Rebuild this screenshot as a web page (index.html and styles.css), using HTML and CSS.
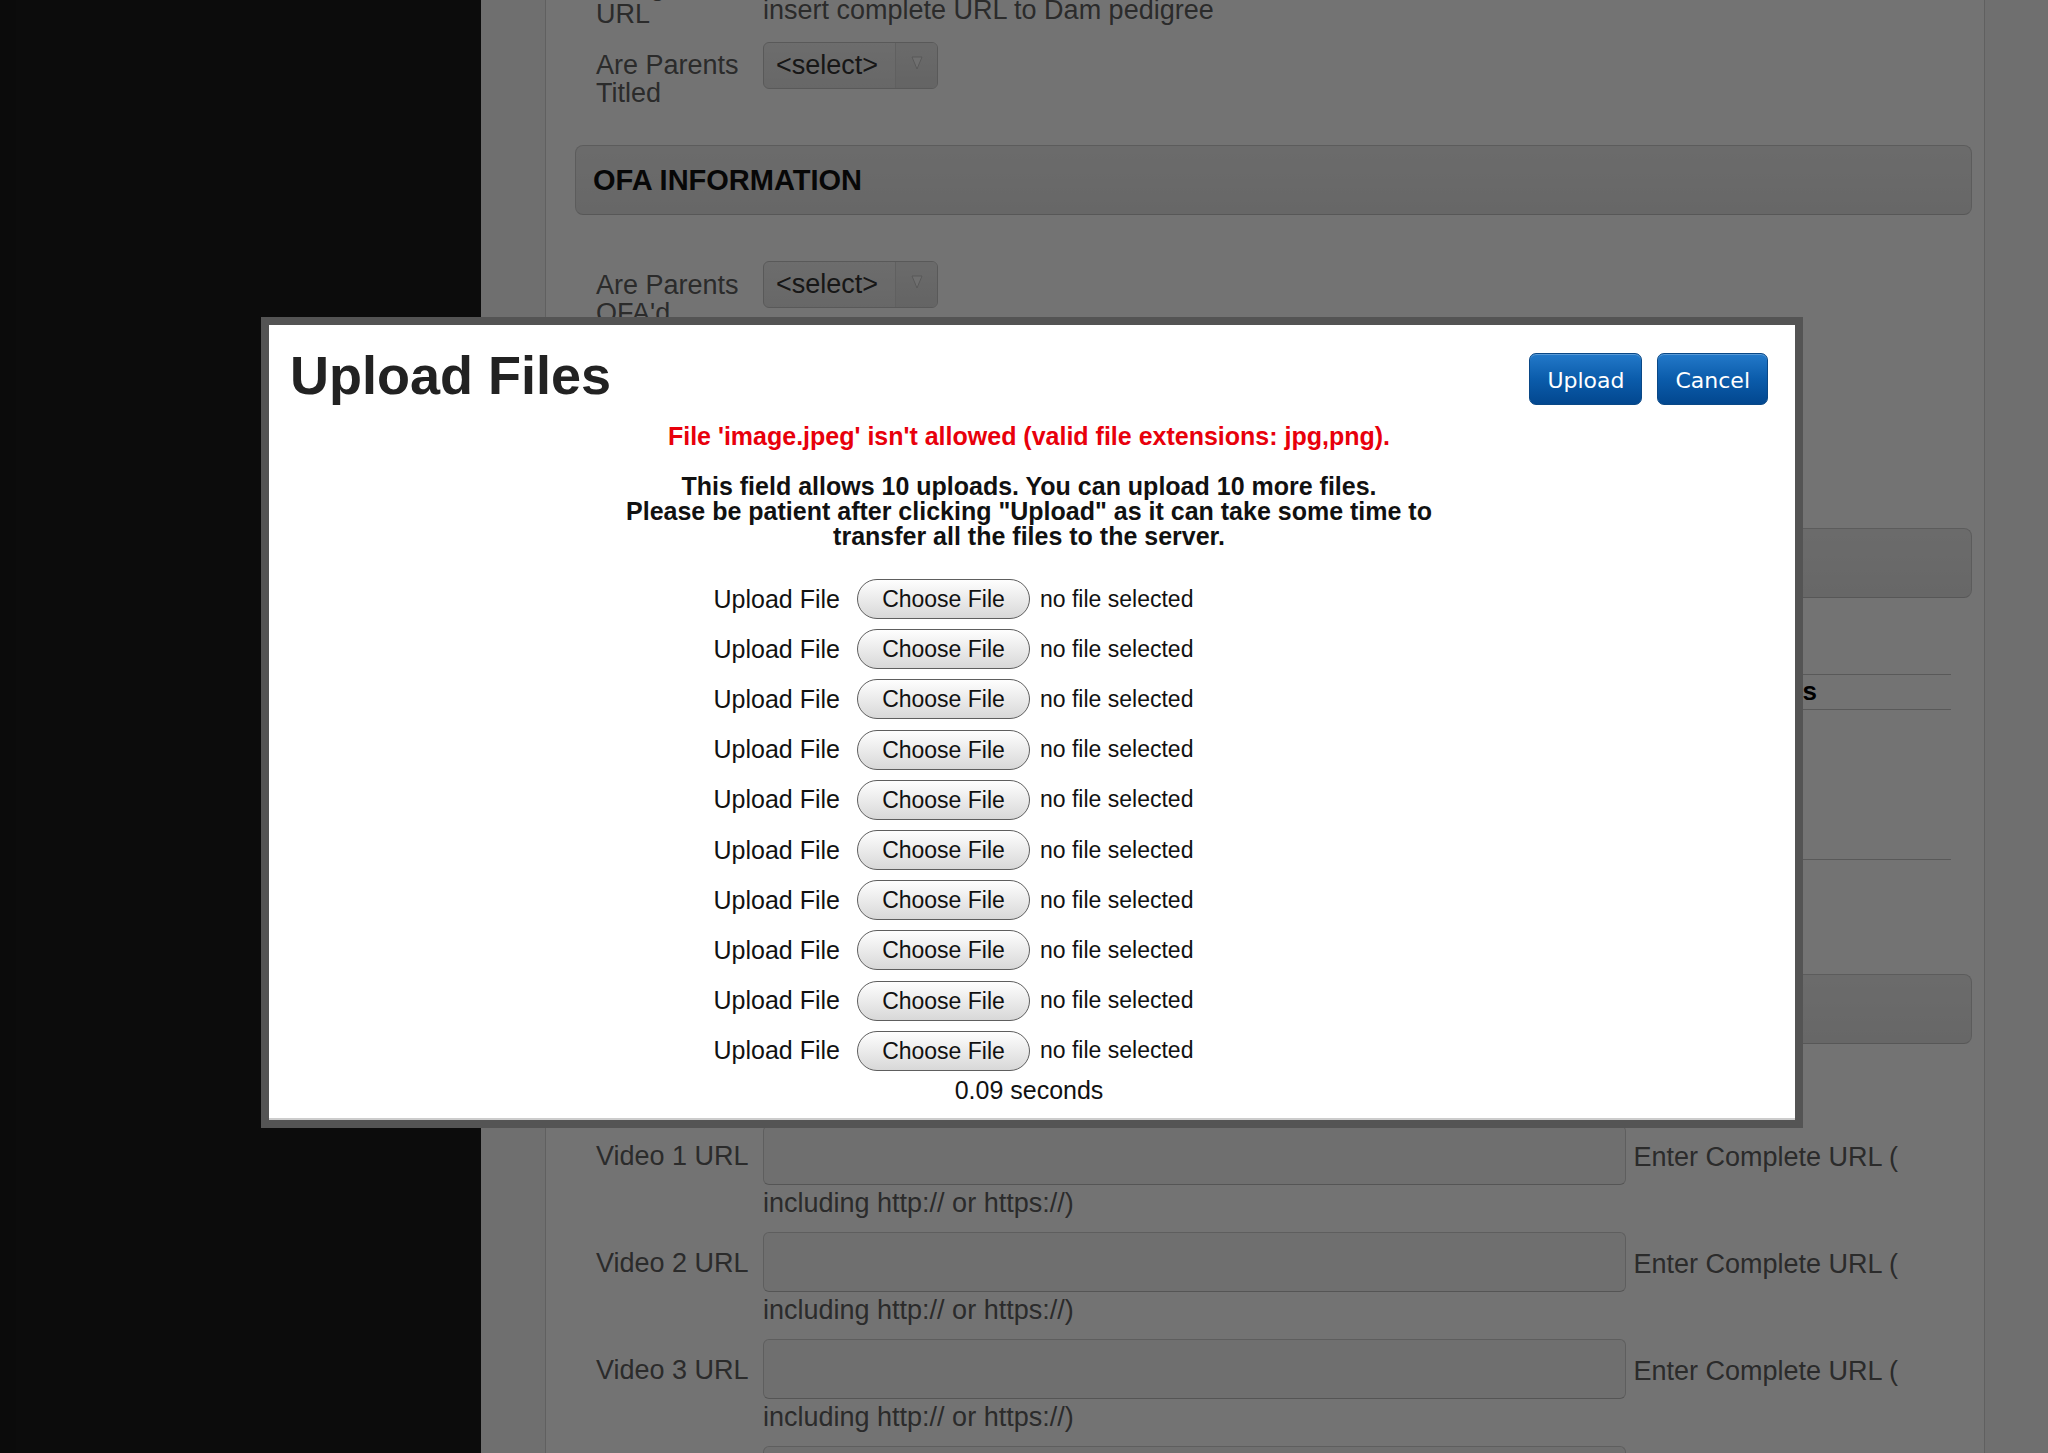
FILE: index.html
```html
<!DOCTYPE html>
<html lang="en">
<head>
    <meta charset="UTF-8">
    <meta name="viewport" content="width=device-width, initial-scale=1.0">
    <title>Litter Registration - Upload Files</title>
    <link rel="stylesheet" href="styles.css">
</head>
<body>
    <div class="site">
        <aside class="sidebar"></aside>
        <main class="main">
            <div class="panel">
                <div class="form-row first-row">
                    <div class="row-label">Dam Pedigree URL</div>
                    <div class="row-field">
                        <div class="text-input small"></div>
                        <div class="hint">insert complete URL to Dam pedigree</div>
                    </div>
                </div>

                <div class="form-row select-row">
                    <div class="row-label">Are Parents Titled</div>
                    <div class="row-field">
                        <div class="select">
                            <span class="select-text">&lt;select&gt;</span>
                            <span class="select-arrow">
                                <svg width="12" height="14" viewBox="0 0 12 14"><polygon points="1,1 11,1 6,13" fill="#f7f7f7" stroke="#c4c4c4" stroke-width="1"/></svg>
                            </span>
                        </div>
                    </div>
                </div>

                <div class="section-head">OFA INFORMATION</div>

                <div class="form-row select-row ofa-row">
                    <div class="row-label">Are Parents OFA'd</div>
                    <div class="row-field">
                        <div class="select">
                            <span class="select-text">&lt;select&gt;</span>
                            <span class="select-arrow">
                                <svg width="12" height="14" viewBox="0 0 12 14"><polygon points="1,1 11,1 6,13" fill="#f7f7f7" stroke="#c4c4c4" stroke-width="1"/></svg>
                            </span>
                        </div>
                    </div>
                </div>

                <div class="section-head head-photos">PHOTOS</div>

                <div class="doc-table">
                    <div class="doc-head">
                        <span>Test Type</span>
                        <span>Results</span>
                    </div>
                    <div class="doc-body"></div>
                </div>

                <div class="section-head head-videos">VIDEOS</div>

                <div class="form-row video-row first-video">
                    <div class="row-label">Video 1 URL</div>
                    <div class="row-field">
                        <span class="text-input wide"></span> Enter Complete URL ( including http:// or https://)
                    </div>
                </div>
                <div class="form-row video-row">
                    <div class="row-label">Video 2 URL</div>
                    <div class="row-field">
                        <span class="text-input wide"></span> Enter Complete URL ( including http:// or https://)
                    </div>
                </div>
                <div class="form-row video-row">
                    <div class="row-label">Video 3 URL</div>
                    <div class="row-field">
                        <span class="text-input wide"></span> Enter Complete URL ( including http:// or https://)
                    </div>
                </div>
                <div class="form-row video-row">
                    <div class="row-label">Video 4 URL</div>
                    <div class="row-field">
                        <span class="text-input wide"></span> Enter Complete URL ( including http:// or https://)
                    </div>
                </div>
            </div>
        </main>
    </div>

    <div class="overlay"></div>

    <div class="modal">
        <div class="modal-body">
            <div class="modal-head">
                <h1>Upload Files</h1>
                <div class="actions">
                    <button class="btn-blue">Upload</button>
                    <button class="btn-blue">Cancel</button>
                </div>
            </div>

            <p class="error">File 'image.jpeg' isn't allowed (valid file extensions: jpg,png).</p>

            <p class="info">This field allows 10 uploads. You can upload 10 more files.<br>Please be patient after clicking "Upload" as it can take some time to transfer all the files to the server.</p>

            <div class="file-list">
                <div class="file-row"><label>Upload File</label><span class="choose">Choose File</span><span class="file-name">no file selected</span></div>
                <div class="file-row"><label>Upload File</label><span class="choose">Choose File</span><span class="file-name">no file selected</span></div>
                <div class="file-row"><label>Upload File</label><span class="choose">Choose File</span><span class="file-name">no file selected</span></div>
                <div class="file-row"><label>Upload File</label><span class="choose">Choose File</span><span class="file-name">no file selected</span></div>
                <div class="file-row"><label>Upload File</label><span class="choose">Choose File</span><span class="file-name">no file selected</span></div>
                <div class="file-row"><label>Upload File</label><span class="choose">Choose File</span><span class="file-name">no file selected</span></div>
                <div class="file-row"><label>Upload File</label><span class="choose">Choose File</span><span class="file-name">no file selected</span></div>
                <div class="file-row"><label>Upload File</label><span class="choose">Choose File</span><span class="file-name">no file selected</span></div>
                <div class="file-row"><label>Upload File</label><span class="choose">Choose File</span><span class="file-name">no file selected</span></div>
                <div class="file-row"><label>Upload File</label><span class="choose">Choose File</span><span class="file-name">no file selected</span></div>
            </div>

            <div class="timing">0.09 seconds</div>
        </div>
    </div>
</body>
</html>
```

FILE: styles.css
```css
* {
    margin: 0;
    padding: 0;
    box-sizing: border-box;
    font-family: 'Liberation Sans', Arial, sans-serif;
}

body {
    background-color: #1b1b1b;
    color: #5f5f5f;
}

.site {
    display: flex;
    height: 100vh;
    overflow: hidden;
}

.sidebar {
    flex: 0 0 481px;
    background-color: #1b1b1b;
    border-left: 16px solid #191919;
}

.main {
    flex: 1;
    background-color: #f6f6f6;
}

/* page behind the dialog */

.panel {
    width: 1440px;
    margin-left: 64px;
    min-height: 1600px;
    background: white;
    border-left: 1px solid #d6d6d6;
    border-right: 1px solid #d6d6d6;
    padding: 0 12px 0 29px;
}

.form-row {
    display: flex;
    align-items: flex-start;
    padding-left: 21px;
    font-size: 27px;
    line-height: 28px;
}

.row-label {
    flex: 0 0 167px;
    color: #5f5f5f;
}

.row-field {
    flex: 1;
    color: #5f5f5f;
}

.first-row {
    margin-top: -60px;
}

.first-row .row-label {
    padding-top: 4px;
}

.hint {
    margin-top: 8px;
}

.select-row {
    margin-top: 14px;
}

.select-row .row-label {
    padding-top: 9px;
}

.ofa-row {
    margin-top: 46px;
}

.ofa-row .row-label {
    padding-top: 10px;
}

.select {
    display: flex;
    width: 175px;
    height: 47px;
    border: 1px solid #c6c6c6;
    border-radius: 6px;
    background: linear-gradient(#f1f1f1, #e5e5e5);
    overflow: hidden;
}

.select-text {
    flex: 1;
    padding-left: 12px;
    line-height: 45px;
    color: #333;
}

.select-arrow {
    flex: 0 0 42px;
    display: flex;
    align-items: flex-start;
    justify-content: center;
    padding-top: 13px;
    border-left: 1px solid #d4d4d4;
    background: linear-gradient(#ececec, #dedede);
}

.text-input {
    display: block;
    background: #f7f7f7;
    border: 1px solid #d0d0d0;
    border-bottom-color: #bdbdbd;
    border-radius: 6px;
}

.text-input.small {
    width: 863px;
    height: 48px;
}

.text-input.wide {
    display: inline-block;
    width: 863px;
    height: 60px;
    vertical-align: -19px;
}

.section-head {
    margin-top: 38px;
    height: 70px;
    border: 1px solid #cdcdcd;
    border-bottom-color: #c2c2c2;
    border-radius: 8px;
    background: linear-gradient(#eeeeee, #e4e4e4);
    padding-left: 17px;
    font-size: 29px;
    font-weight: bold;
    line-height: 68px;
    color: #111;
}

.head-photos {
    margin-top: 201px;
}

.head-videos {
    margin-top: 114px;
}

.doc-table {
    margin: 76px 21px 0 21px;
    border-bottom: 1px solid #c6c6c6;
}

.doc-head {
    display: grid;
    grid-template-columns: 1127px 1fr;
    height: 36px;
    border-top: 1px solid #c6c6c6;
    border-bottom: 1px solid #c6c6c6;
    font-size: 26px;
    font-weight: bold;
    line-height: 33px;
    color: #000;
}

.doc-body {
    height: 149px;
}

.video-row {
    margin-top: 11px;
}

.video-row .row-field {
    line-height: 36px;
}

.first-video {
    margin-top: 81px;
}

.video-row .row-label {
    padding-top: 17px;
}

/* dialog */

.overlay {
    position: fixed;
    inset: 0;
    background: rgba(0, 0, 0, 0.55);
}

.modal {
    position: fixed;
    left: 261px;
    top: 317px;
    width: 1542px;
    border: 8px solid #545454;
    background: white;
}

.modal-body {
    padding: 23px 27px 16px 21px;
    box-shadow: inset 0 -2px 0 #cccccc;
    color: #111;
    text-align: center;
}

.modal-head {
    display: flex;
    justify-content: space-between;
    align-items: flex-start;
}

.modal-head h1 {
    font-size: 54px;
    line-height: 54px;
    font-weight: bold;
    color: #222;
}

.actions {
    display: flex;
    gap: 15px;
    margin-top: 5px;
}

.btn-blue {
    height: 52px;
    padding: 2px 17px 0 17px;
    border: 1px solid #0a4886;
    border-radius: 7px;
    background: linear-gradient(#2379c9 0%, #0b5cab 50%, #02478f 100%);
    box-shadow: inset 0 1px 0 rgba(255, 255, 255, 0.25);
    color: white;
    font-family: 'DejaVu Sans', Verdana, sans-serif;
    font-size: 22px;
}

.error {
    margin-top: 19px;
    font-size: 25px;
    line-height: 25px;
    font-weight: bold;
    color: #e8000b;
}

.info {
    width: 846px;
    margin: 25px auto 0 auto;
    font-size: 25px;
    line-height: 25px;
    font-weight: bold;
    color: #111;
}

.file-list {
    width: 640px;
    margin: 25px auto 0 auto;
}

.file-row {
    display: flex;
    align-items: center;
    height: 50.2px;
}

.file-row label {
    flex: 0 0 131px;
    text-align: right;
    font-size: 25px;
    color: #111;
}

.choose {
    flex: 0 0 173px;
    height: 40px;
    margin-left: 17px;
    border: 1px solid #5e5e5e;
    border-radius: 20px;
    background: linear-gradient(#fefefe, #d8d8d8);
    font-size: 23px;
    line-height: 38px;
    text-align: center;
    color: #111;
}

.file-name {
    margin-left: 10px;
    font-size: 23px;
    color: #111;
}

.timing {
    font-size: 25px;
    line-height: 28px;
    color: #111;
}
```
